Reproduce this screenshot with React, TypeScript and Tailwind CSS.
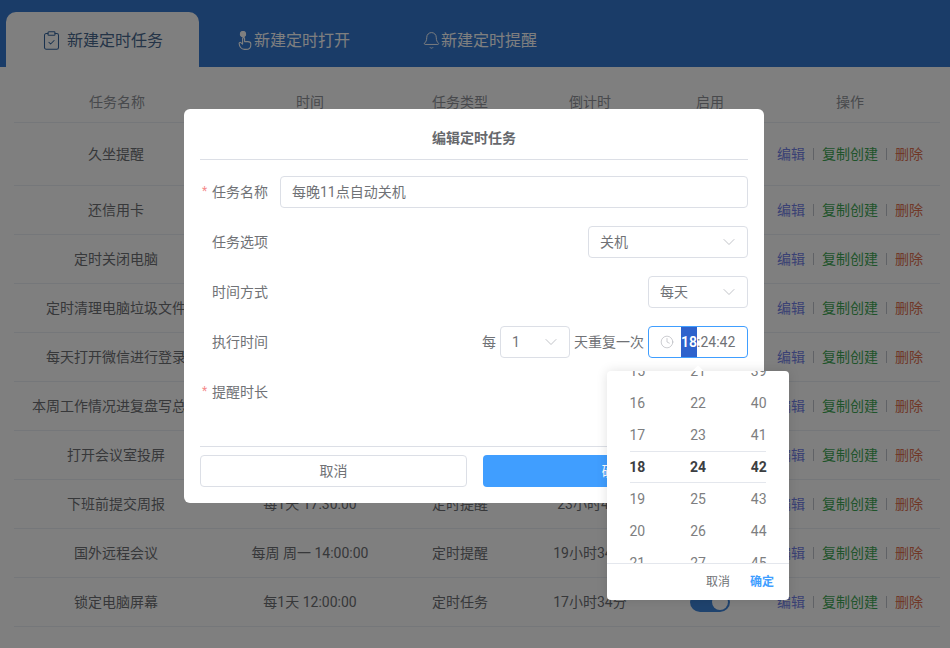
import React from "react";
import { ClipboardCheck, Bell, Clock, ChevronDown } from "lucide-react";

const rows = [
  ["久坐提醒", "每1小时", "定时提醒", "1小时", "h-[63px] pb-[1px]"],
  ["还信用卡", "每月 10日 09:00:00", "定时提醒", "15小时34分", "h-[49px]"],
  ["定时关闭电脑", "每1天 23:00:00", "定时任务", "4小时34分", "h-[49px]"],
  ["定时清理电脑垃圾文件", "每周 周五 18:00:00", "定时任务", "23小时34分", "h-[49px]"],
  ["每天打开微信进行登录", "每1天 09:00:00", "定时打开", "14小时34分", "h-[49px]"],
  ["本周工作情况进复盘写总结", "每周 周五 17:00:00", "定时提醒", "22小时34分", "h-[49px]"],
  ["打开会议室投屏", "每1天 14:00:00", "定时打开", "19小时34分", "h-[49px]"],
  ["下班前提交周报", "每1天 17:30:00", "定时提醒", "23小时4分", "h-[49px]"],
  ["国外远程会议", "每周 周一 14:00:00", "定时提醒", "19小时34分", "h-[49px]"],
  ["锁定电脑屏幕", "每1天 12:00:00", "定时任务", "17小时34分", "h-[49px]"],
];

const cols = "grid grid-cols-[206px_180px_120px_140px_100px_180px] items-center text-center";

function Select({ width, label }: { width: string; label: string }) {
  return (
    <div className={`${width} h-8 rounded border border-[#dcdfe6] flex items-center justify-between pl-[11px] pr-[8px] text-[#707276]`}>
      <span>{label}</span>
      <ChevronDown size={20} strokeWidth={1} className="text-[#b4b7bd]" />
    </div>
  );
}

function Label({ text, star }: { text: string; star?: boolean }) {
  return (
    <div className="relative w-[80px] shrink-0 flex justify-end pr-3 text-[#707276]">
      {star && <span className="absolute left-[2px] top-[1px] text-xs text-[#f58a8a]">*</span>}
      <span>{text}</span>
    </div>
  );
}

function WheelCol({ nums, sel }: { nums: number[]; sel: number }) {
  return (
    <div className="flex-1 -mt-4 flex flex-col items-center">
      {nums.map((n) => (
        <div key={n} className={`h-8 shrink-0 flex items-center ${n === sel ? "font-bold text-[#3c3e42]" : "text-[#7d7e80]"}`}>
          {n}
        </div>
      ))}
    </div>
  );
}

function TapIcon() {
  return (
    <svg width="15" height="20" viewBox="0 0 15 20" fill="none" stroke="currentColor" strokeWidth="1.1" strokeLinecap="round" strokeLinejoin="round">
      <circle cx="6" cy="3" r="2.6" fill="currentColor" />
      <path d="M5.6 7.5v5.6L3.8 11.6c-.9-.6-2 .2-1.6 1.1.1 2.6 2 5.7 5.2 5.7h1.5c2.8 0 4.9-1.6 4.9-4.2v-1.4c0-1.6-1.6-2.2-3-2.2H7.6V7.5c0-1.2-2-1.2-2 0z" />
    </svg>
  );
}

export default function App() {
  return (
    <div
      className="relative w-[950px] h-[648px] overflow-hidden bg-white text-sm text-[#6e7074]"
      style={{ fontFamily: 'Roboto, "Noto Sans CJK SC", sans-serif' }}
    >
      {/* tabs */}
      <div className="h-[67px] bg-[#3478d0] flex items-end pl-[6px] text-white text-base">
        <div className="h-[55px] w-[193px] pt-[2px] bg-white rounded-t-[10px] flex items-center pl-[35px] gap-[5px] text-[#48688f]">
          <ClipboardCheck size={21} strokeWidth={1.2} className="text-[#34659f]" />
          <span>新建定时任务</span>
        </div>
        <div className="h-[55px] pt-[2px] flex items-center gap-[2px] pl-[38px] pr-[38px]">
          <TapIcon />
          <span>新建定时打开</span>
        </div>
        <div className="h-[55px] pt-[2px] flex items-center pl-[34px]">
          <Bell size={19} strokeWidth={1.2} />
          <span>新建定时提醒</span>
        </div>
      </div>

      {/* table */}
      <div className="ml-[14px] w-[926px]">
        <div className={`${cols} h-[56px] pt-[15px] border-b border-[#ebeef5] text-[#909399]`}>
          <div>任务名称</div>
          <div>时间</div>
          <div>任务类型</div>
          <div>倒计时</div>
          <div>启用</div>
          <div>操作</div>
        </div>
        {rows.map((r) => (
          <div key={r[0]} className={`${cols} ${r[4]} border-b border-[#ebeef5]`}>
            <div className="whitespace-nowrap pr-[2px]">{r[0]}</div>
            <div>{r[1]}</div>
            <div>{r[2]}</div>
            <div>{r[3]}</div>
            <div className="flex justify-center">
              <div className="w-10 h-5 rounded-full bg-[#3f86dc] flex items-center justify-end pr-[2px]">
                <div className="w-4 h-4 rounded-full bg-white" />
              </div>
            </div>
            <div className="flex justify-center items-center gap-[8px] whitespace-nowrap">
              <span className="text-[#7482e8]">编辑</span>
              <span className="w-px h-3 bg-[#c0c4cc]" />
              <span className="text-[#3fa855]">复制创建</span>
              <span className="w-px h-3 bg-[#c0c4cc]" />
              <span className="text-[#e07050]">删除</span>
            </div>
          </div>
        ))}
      </div>

      {/* overlay */}
      <div className="absolute inset-0 bg-black/50" />

      {/* dialog */}
      <div className="absolute left-[184px] top-[109px] w-[580px] h-[394px] bg-white rounded-md px-4 text-[#707276]">
        <div className="h-[51px] pt-2 border-b border-[#dcdfe6] flex items-center justify-center font-bold text-[#66686c]">
          编辑定时任务
        </div>
        <div className="mt-4 flex flex-col gap-[18px]">
          <div className="h-8 flex items-center">
            <Label text="任务名称" star />
            <div className="flex-1 h-8 rounded border border-[#dcdfe6] flex items-center px-[11px]">每晚11点自动关机</div>
          </div>
          <div className="h-8 flex items-center">
            <Label text="任务选项" />
            <div className="flex-1 flex justify-end">
              <Select width="w-[160px]" label="关机" />
            </div>
          </div>
          <div className="h-8 flex items-center">
            <Label text="时间方式" />
            <div className="flex-1 flex justify-end">
              <Select width="w-[100px]" label="每天" />
            </div>
          </div>
          <div className="h-8 flex items-center">
            <Label text="执行时间" />
            <div className="flex-1 flex justify-end items-center gap-1">
              <span>每</span>
              <Select width="w-[70px]" label="1" />
              <span>天重复一次</span>
              <div className="w-[100px] h-8 rounded border border-[#409eff] flex items-center pl-[11px] overflow-hidden">
                <Clock size={14} strokeWidth={1} className="text-[#a8abb2] shrink-0" />
                <span className="ml-[7px] h-[30px] w-4 bg-[#2e62cc] text-white font-semibold flex items-center justify-center">18</span>
                <span>:24:42</span>
              </div>
            </div>
          </div>
          <div className="h-8 flex items-center">
            <Label text="提醒时长" star />
          </div>
        </div>
        <div className="mt-[38px] border-t border-[#dcdfe6] pt-2 flex gap-4">
          <div className="flex-1 h-8 rounded border border-[#dcdfe6] flex items-center justify-center">取消</div>
          <div className="flex-1 h-8 rounded bg-[#409eff] text-white flex items-center justify-center">确定</div>
        </div>
      </div>

      {/* time picker */}
      <div className="absolute left-[607px] top-[371px] w-[182px] h-[229px] bg-white rounded shadow-[0_0_12px_rgba(0,0,0,0.12)] text-[#707276]">
        <div className="absolute left-[87px] -top-[4px] w-2 h-2 rotate-45 bg-white" />
        <div className="relative h-[192px] overflow-hidden flex">
          <WheelCol nums={[15, 16, 17, 18, 19, 20, 21]} sel={18} />
          <WheelCol nums={[21, 22, 23, 24, 25, 26, 27]} sel={24} />
          <WheelCol nums={[39, 40, 41, 42, 43, 44, 45]} sel={42} />
          <div className="absolute left-[23px] right-[23px] top-[80px] h-8 border-y border-[#e4e7ed]" />
        </div>
        <div className="h-[37px] border-t border-[#e4e7ed] flex items-center justify-end gap-5 pr-[15px] text-xs">
          <span>取消</span>
          <span className="font-bold text-[#409eff]">确定</span>
        </div>
      </div>
    </div>
  );
}
